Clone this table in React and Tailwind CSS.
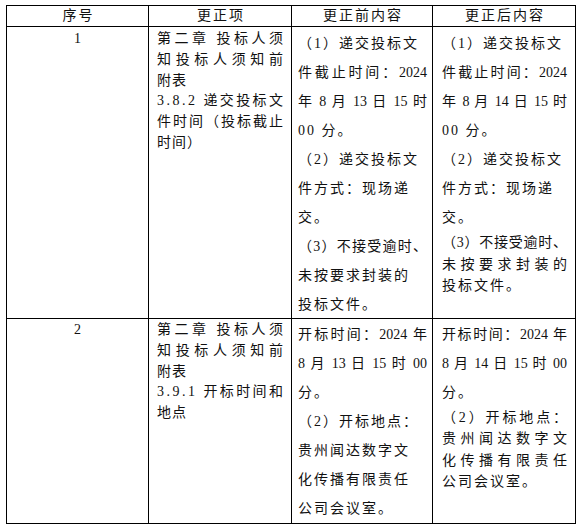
import clsx from "clsx";

// line heights used by the source document
const LH_ITEM = "h-[20.8px] leading-[20.8px]";
const LH_WIDE = "h-[29.1px] leading-[29.1px]";
const LH_TIGHT = "h-[21.4px] leading-[21.4px]";

// j = justified line (full width), otherwise natural spacing
const Line = ({ text, j, lh, tr = "tracking-[2px]" }) => (
  <div
    className={clsx(
      "whitespace-nowrap",
      lh,
      j ? "text-justify [text-align-last:justify]" : tr
    )}
  >
    {text}
  </div>
);

const Block = ({ lines, lh, tr }) =>
  lines.map((l, i) =>
    typeof l === "string" ? (
      <Line key={i} text={l} lh={lh} tr={tr} />
    ) : (
      <Line key={i} text={l.t} j lh={lh} />
    )
  );

const J = (t) => ({ t });

// clause numbers are set half-width in the original, so the dots sit wide
const Num = ({ children }) => <span className="tracking-[2.5px]">{children}</span>;

const rows = [
  {
    no: "1",
    pad: "pt-[2px]",
    padWide: "pt-[1.5px]",
    item: [
      J("第二章 投标人须"),
      J("知投标人须知前"),
      "附表",
      J(<><Num>3.8.2</Num> 递交投标文</>),
      J("件时间（投标截止"),
      "时间）",
    ],
    before: [
      {
        lh: LH_WIDE,
        lines: [
          "（1）递交投标文",
          J("件截止时间：2024"),
          J("年 8 月 13 日 15 时"),
          "00 分。",
          "（2）递交投标文",
          "件方式：现场递",
          "交。",
          J("（3）不接受逾时、"),
          "未按要求封装的",
          "投标文件。",
        ],
      },
    ],
    after: [
      {
        lh: LH_WIDE,
        lines: [
          "（1）递交投标文",
          J("件截止时间：2024"),
          J("年 8 月 14 日 15 时"),
          "00 分。",
          "（2）递交投标文",
          "件方式：现场递",
          "交。",
        ],
      },
      {
        lh: LH_TIGHT,
        lines: [J("（3）不接受逾时、"), J("未按要求封装的"), "投标文件。"],
      },
    ],
  },
  {
    no: "2",
    pad: "pt-[1px]",
    padWide: "pt-[0.5px]",
    item: [
      J("第二章 投标人须"),
      J("知投标人须知前"),
      "附表",
      J(<><Num>3.9.1</Num> 开标时间和</>),
      "地点",
    ],
    before: [
      {
        lh: LH_WIDE,
        lines: [
          J("开标时间：2024 年"),
          J("8 月 13 日 15 时 00"),
          "分。",
          "（2）开标地点：",
          "贵州闻达数字文",
          "化传播有限责任",
          "公司会议室。",
        ],
      },
    ],
    after: [
      {
        lh: LH_WIDE,
        lines: [J("开标时间：2024 年"), J("8 月 14 日 15 时 00"), "分。"],
      },
      {
        lh: LH_TIGHT,
        lines: [
          J("（2）开标地点："),
          J("贵州闻达数字文"),
          J("化传播有限责任"),
          "公司会议室。",
        ],
      },
    ],
  },
];

const cell = "border-r border-b border-black";

export default function App() {
  return (
    <div className="min-h-[527px] w-[579px] bg-white pt-[5px] pl-[6px] text-[14px] text-[#111] [font-family:'Liberation_Serif','Noto_Sans_CJK_SC',serif]">
      <div className="grid w-[570px] grid-cols-[142px_143px_141px_143px] grid-rows-[21px_292px_205px] border-t border-l border-black">
        {["序号", "更正项", "更正前内容", "更正后内容"].map((h) => (
          <div
            key={h}
            className={clsx(cell, "flex items-center justify-center pl-[2px] leading-[20px] tracking-[2px]")}
          >
            {h}
          </div>
        ))}

        {rows.map((r) => (
          <div key={r.no} className="contents">
            <div className={clsx(cell, r.pad, "text-center leading-[20.8px]")}>{r.no}</div>
            <div className={clsx(cell, r.pad, "px-[8px]")}>
              <Block lines={r.item} lh={LH_ITEM} tr="tracking-[1px]" />
            </div>
            <div className={clsx(cell, r.padWide, "pl-[6px] pr-[5px]")}>
              {r.before.map((b, i) => (
                <Block key={i} lines={b.lines} lh={b.lh} />
              ))}
            </div>
            <div className={clsx(cell, r.padWide, "pl-[9px] pr-[8px]")}>
              {r.after.map((b, i) => (
                <Block key={i} lines={b.lines} lh={b.lh} />
              ))}
            </div>
          </div>
        ))}
      </div>
    </div>
  );
}
